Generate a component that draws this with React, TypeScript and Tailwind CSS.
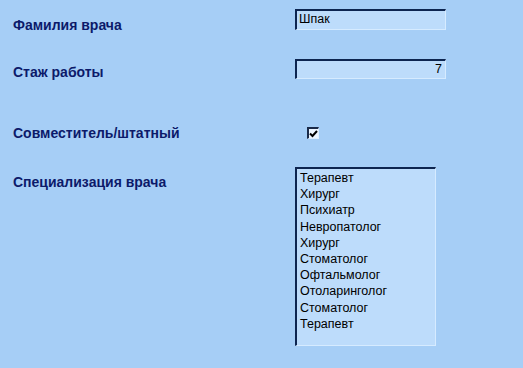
import React from "react";

const items = [
  "Терапевт",
  "Хирург",
  "Психиатр",
  "Невропатолог",
  "Хирург",
  "Стоматолог",
  "Офтальмолог",
  "Отоларинголог",
  "Стоматолог",
  "Терапевт",
];

export default function App() {
  return (
    <div
      className="w-[523px] h-[368px] bg-[#a6cef6] pl-[13px] overflow-hidden"
      style={{ fontFamily: '"Liberation Sans", Arial, sans-serif' }}
    >
      <div className="flex pt-[9px]">
        <div className="w-[282px] h-[21px] flex items-center pt-[12px] text-[14px] font-bold text-[#0c1a6a]">
          Фамилия врача
        </div>
        <div className="w-[151px] h-[21px] bg-[#bddcfb] border-t-2 border-l-2 border-[#0d2550] border-r border-b border-r-[#d6ebff] border-b-[#d6ebff] text-[12.5px] leading-[17px] text-black pl-[2px]">
          Шпак
        </div>
      </div>
      <div className="flex mt-[29px]">
        <div className="w-[282px] h-[20px] flex items-center pt-[6px] text-[14px] font-bold text-[#0c1a6a]">
          Стаж работы
        </div>
        <div className="w-[151px] h-[20px] bg-[#bddcfb] border-t-2 border-l-2 border-[#0d2550] border-r border-b border-r-[#d6ebff] border-b-[#d6ebff] text-[12.5px] leading-[16px] text-black pr-[3px] text-right">
          7
        </div>
      </div>
      <div className="flex mt-[48px]">
        <div className="w-[294px] h-[12px] flex items-center pt-[1px] text-[14px] font-bold text-[#0c1a6a] whitespace-nowrap">
          Совместитель/штатный
        </div>
        <div className="w-[12px] h-[12px] bg-[#eef6ff] border-t-2 border-l-2 border-[#1a2a48] border-r border-b border-r-[#dfefff] border-b-[#dfefff] flex items-center justify-center">
          <svg width="9" height="8" viewBox="0 0 9 8">
            <path d="M1 3.5 L3.5 6 L8 1" stroke="#000" strokeWidth="2" fill="none" />
          </svg>
        </div>
      </div>
      <div className="flex mt-[28px]">
        <div className="w-[282px] pt-[7px] text-[14px] font-bold text-[#0c1a6a] leading-[16px]">
          Специализация врача
        </div>
        <div className="w-[141px] h-[179px] bg-[#bddcfb] border-t-2 border-l-2 border-[#0d2550] border-r border-b border-r-[#d6ebff] border-b-[#d6ebff] pl-[3px] pt-[1px] text-[12.5px] leading-[16.2px] text-black">
          {items.map((t, i) => (
            <div key={i}>{t}</div>
          ))}
        </div>
      </div>
    </div>
  );
}
